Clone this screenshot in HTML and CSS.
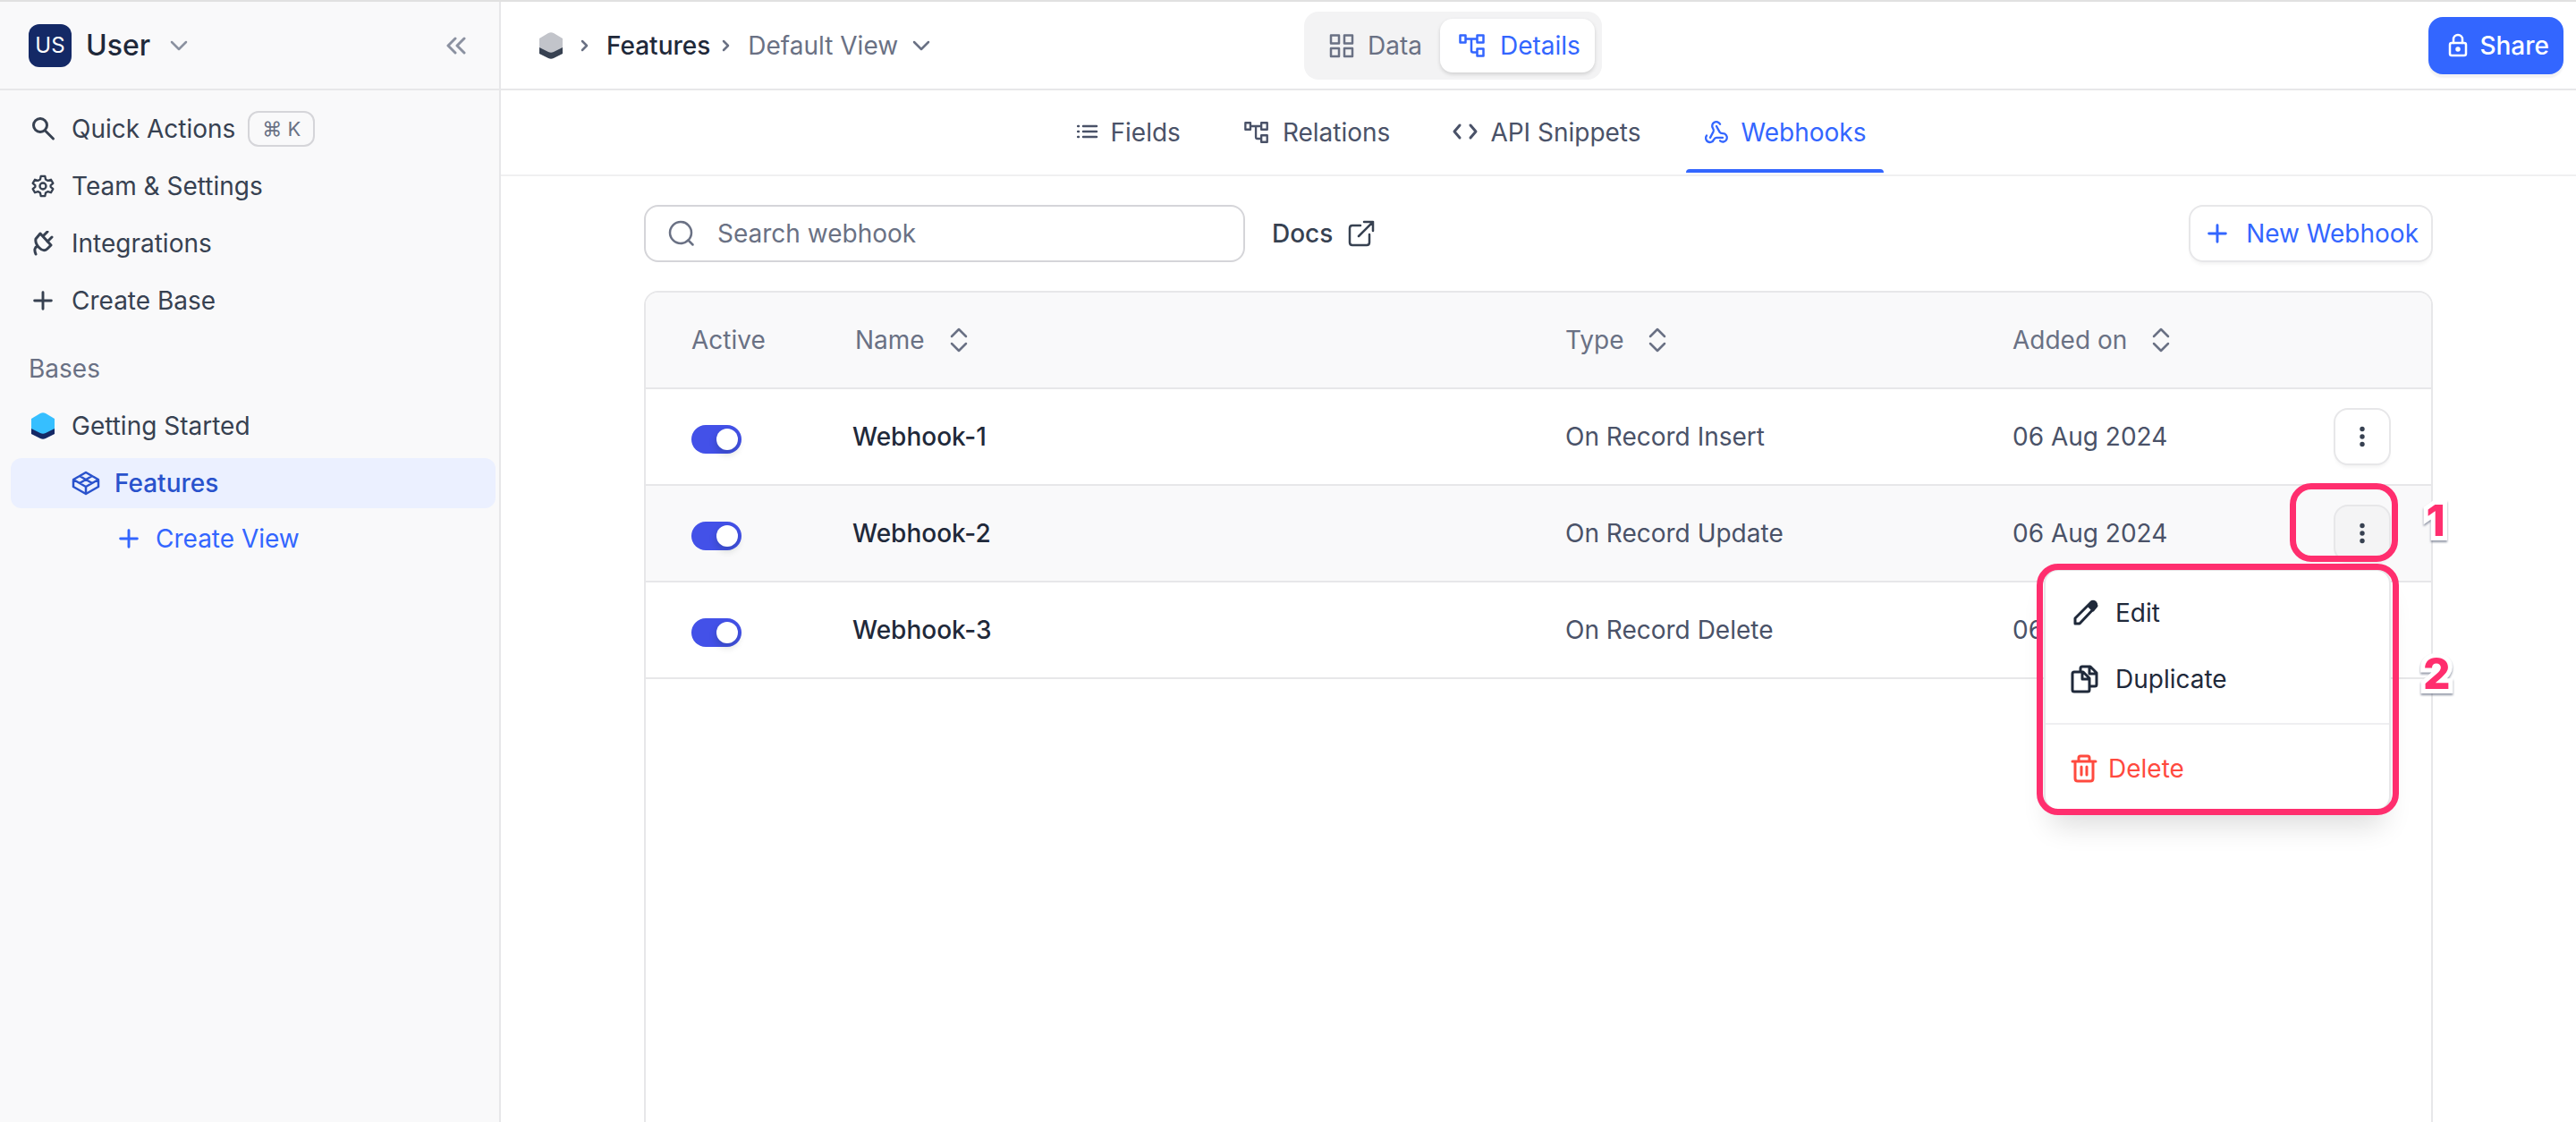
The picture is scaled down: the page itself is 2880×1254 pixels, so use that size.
FILE: index.html
```html
<!DOCTYPE html>
<html lang="en">

<head>
    <meta charset="utf-8">
    <meta name="viewport" content="width=device-width, initial-scale=1.0">
    <title>Webhooks</title>
    <link rel="stylesheet" href="styles.css">
</head>

<body>

    <!-- shared icons -->
    <svg class="sprite" aria-hidden="true">
        <symbol id="plus" viewBox="0 0 24 24"><path d="M12 4v16M4 12h16" /></symbol>
        <symbol id="chevron" viewBox="0 0 24 24"><path d="M4 8l8 8 8-8" /></symbol>
        <symbol id="crumb" viewBox="0 0 12 16"><path d="M3 3l5 5-5 5" /></symbol>
        <symbol id="relation" viewBox="0 0 32 28"><path d="M2.500 2.500h6v8h-6zM21.500 2.500h7v8h-7zM21.500 17.500h7v8h-7zM9 6.500h12M15 6.500v13q0 2 2 2h4" /></symbol>
        <symbol id="sort" viewBox="0 0 20 28"><path d="M2 10l8-8 8 8M2 18l8 8 8-8" /></symbol>
        <symbol id="dots" viewBox="0 0 24 24"><circle cx="12" cy="3.500" r="2.700" /><circle cx="12" cy="12" r="2.700" /><circle cx="12" cy="20.500" r="2.700" /></symbol>
    </svg>

    <aside class="sidebar">
        <div class="sidebar-top">
            <button class="workspace">
                <span class="avatar">US</span>
                <span class="workspace-name">User</span>
                <svg class="icon muted" width="24" height="24"><use href="#chevron" /></svg>
            </button>
            <button class="collapse" aria-label="Collapse sidebar">
                <svg class="icon bold" width="24" height="24" viewBox="0 0 24 24"><path d="M11 4l-8 8 8 8M21 4l-8 8 8 8" /></svg>
            </button>
        </div>

        <nav class="side-nav">
            <a href="#">
                <svg class="icon bold" width="28" height="28" viewBox="0 0 28 28"><circle cx="11" cy="10" r="7.500" /><path d="M16.500 16l9 9" /></svg>
                Quick Actions <kbd>⌘ K</kbd>
            </a>
            <a href="#">
                <svg class="icon gear" width="28" height="28" viewBox="0 0 24 24"><circle cx="12" cy="12" r="3" /><path d="M10 2.500h4l.6 3 2.200 1.300 2.900-1 2 3.500-2.300 2v1.400l2.300 2-2 3.500-2.900-1-2.200 1.300-.6 3h-4l-.6-3-2.200-1.300-2.900 1-2-3.500 2.300-2v-1.400l-2.300-2 2-3.500 2.900 1 2.200-1.300z" /></svg>
                Team &amp; Settings
            </a>
            <a href="#">
                <svg class="icon bold" width="28" height="28" viewBox="0 0 28 28"><path d="M11 3l12 13-4 4q-4 4-9-1t-4-10zM14 6l5-5M19 12l5-5M8 17q-5 2-2 9" /></svg>
                Integrations
            </a>
            <a href="#">
                <svg class="icon" width="28" height="28"><use href="#plus" /></svg>
                Create Base
            </a>
        </nav>

        <h2 class="side-title">Bases</h2>
        <nav class="base-nav">
            <a href="#">
                <svg width="28" height="32" viewBox="0 0 28 32"><path fill="#142966" d="M1 16h26v9l-10 5q-3 1.500-6 0L1 25z" /><path fill="#36bfff" d="M1 8l10-6q3-1.500 6 0l10 6v11l-10 5q-3 1.500-6 0L1 19z" /></svg>
                Getting Started
            </a>
            <a href="#" class="base-table selected">
                <svg class="icon" width="32" height="28" viewBox="0 0 32 28"><path d="M2 10L16 2l14 8v8l-14 8-14-8zM2 10l14 8 14-8M16 18v8M9 6l14 8M23 6L9 14" /></svg>
                Features
            </a>
            <a href="#" class="base-view">
                <svg class="icon" width="28" height="28"><use href="#plus" /></svg>
                Create View
            </a>
        </nav>
    </aside>

    <main>
        <header>
            <nav class="breadcrumb">
                <svg width="28" height="32" viewBox="0 0 28 32"><path fill="#374151" d="M1 16h26v9l-10 5q-3 1.500-6 0L1 25z" /><path fill="#c2c4ca" d="M1 8l10-6q3-1.500 6 0l10 6v10l-10 5q-3 1.500-6 0L1 18z" /></svg>
                <svg class="icon crumb" width="12" height="16"><use href="#crumb" /></svg>
                <a href="#" class="current">Features</a>
                <svg class="icon crumb" width="12" height="16"><use href="#crumb" /></svg>
                <a href="#">Default View</a>
                <svg class="icon" width="24" height="24"><use href="#chevron" /></svg>
            </nav>

            <div class="switcher">
                <button>
                    <svg class="icon" width="28" height="28" viewBox="0 0 28 28"><path d="M2 2.500h9v9H2zM17 2.500h9v9h-9zM2 17h9v9H2zM17 17h9v9h-9z" /></svg>
                    Data
                </button>
                <button class="on">
                    <svg class="icon" width="32" height="28"><use href="#relation" /></svg>
                    Details
                </button>
            </div>

            <button class="share">
                <svg class="icon" width="24" height="28" viewBox="0 0 24 28"><rect x="3" y="11" width="18" height="14" rx="2" /><path d="M7 11V7a5 5 0 0 1 10 0v4" /><circle class="solid" cx="12" cy="18" r="1.500" /></svg>
                Share
            </button>
        </header>

        <nav class="tabs">
            <a href="#">
                <svg class="icon" width="24" height="28" viewBox="0 0 24 28"><path d="M7 7h15M7 13h15M7 19h15M1 7h1M1 13h1M1 19h1" /></svg>
                Fields
            </a>
            <a href="#">
                <svg class="icon" width="30" height="28"><use href="#relation" /></svg>
                Relations
            </a>
            <a href="#">
                <svg class="icon bold" width="28" height="28" viewBox="0 0 28 28"><path d="M8 6l-6 7 6 7M20 6l6 7-6 7" /></svg>
                API Snippets
            </a>
            <a href="#" class="on">
                <svg class="icon webhook" width="28" height="28" viewBox="0 0 24 24"><path d="M18 17h-6c-1.100 0-2 .9-2.500 1.900A4 4 0 1 1 2.600 15M6 17l3.100-5.800c.5-1 .1-2.200-.5-3.100a4 4 0 1 1 6.900-4M12 6l3.100 5.700c.6 1 1.800 1.300 2.900 1.300a4 4 0 1 1-2.500 7" /></svg>
                Webhooks
            </a>
        </nav>

        <div class="content">
            <div class="toolbar">
                <label class="search">
                    <svg class="icon" width="32" height="32" viewBox="0 0 32 32"><circle cx="15" cy="15" r="12" /><path d="M23.500 23.500l5 5" /></svg>
                    <input type="text" placeholder="Search webhook" aria-label="Search webhook">
                </label>
                <a href="#" class="docs">
                    Docs
                    <svg class="icon" width="32" height="32" viewBox="0 0 32 32"><path d="M15 7H6q-3 0-3 3v16q0 3 3 3h16q3 0 3-3v-9M13 19L29 3M19 3h10v10" /></svg>
                </a>
                <button class="new-webhook">
                    <svg class="icon" width="28" height="28"><use href="#plus" /></svg>
                    New Webhook
                </button>
            </div>

            <div class="table-frame">
                <table>
                    <thead>
                        <tr>
                            <th class="col-active">Active</th>
                            <th class="col-name">Name <button class="sort" aria-label="Sort by name"><svg class="icon" width="20" height="28"><use href="#sort" /></svg></button></th>
                            <th class="col-type">Type <button class="sort" aria-label="Sort by type"><svg class="icon" width="20" height="28"><use href="#sort" /></svg></button></th>
                            <th class="col-date">Added on <button class="sort" aria-label="Sort by date"><svg class="icon" width="20" height="28"><use href="#sort" /></svg></button></th>
                            <th class="col-more"></th>
                        </tr>
                    </thead>
                    <tbody>
                        <tr>
                            <td><input type="checkbox" class="toggle" aria-label="Webhook-1 active" checked></td>
                            <td class="name">Webhook-1</td>
                            <td>On Record Insert</td>
                            <td>06 Aug 2024</td>
                            <td><div class="more"><button aria-label="More"><svg width="24" height="24"><use href="#dots" /></svg></button></div></td>
                        </tr>
                        <tr class="active-row">
                            <td><input type="checkbox" class="toggle" aria-label="Webhook-2 active" checked></td>
                            <td class="name">Webhook-2</td>
                            <td>On Record Update</td>
                            <td>06 Aug 2024</td>
                            <td>
                                <div class="more open">
                                    <button aria-label="More"><svg width="24" height="24"><use href="#dots" /></svg></button>
                                    <div class="menu">
                                        <button>
                                            <svg class="icon bold" width="32" height="32" viewBox="0 0 32 32"><path d="M5 28v-6L23 4q2-1.500 4 0t1 5L10 28z" /><path class="solid" d="M20 8l4-4q4-1 5 4l-4 5z" /></svg>
                                            Edit
                                        </button>
                                        <button>
                                            <svg class="icon bold" width="32" height="32" viewBox="0 0 32 32"><path d="M4 8h10l7 7v13q0 2-2 2H4q-2 0-2-2V10q0-2 2-2zM13 8v8h8M11 7V4q0-2 2-2h9l7 7v13q0 2-2 2h-5M21 2v8h8" /></svg>
                                            Duplicate
                                        </button>
                                        <hr>
                                        <button class="danger">
                                            <svg class="icon bold" width="32" height="32" viewBox="0 0 32 32"><path d="M2 8h26M5 8v19q0 3 3 3h14q3 0 3-3V8M9 8V4q0-2 2-2h8q2 0 2 2v4M12 14v9M18 14v9" /></svg>
                                            Delete
                                        </button>
                                    </div>
                                    <span class="mark mark-button"></span>
                                    <span class="mark mark-menu"></span>
                                    <span class="step step-one">1</span>
                                    <span class="step step-two">2</span>
                                </div>
                            </td>
                        </tr>
                        <tr>
                            <td><input type="checkbox" class="toggle" aria-label="Webhook-3 active" checked></td>
                            <td class="name">Webhook-3</td>
                            <td>On Record Delete</td>
                            <td>06 Aug 2024</td>
                            <td><div class="more"><button aria-label="More"><svg width="24" height="24"><use href="#dots" /></svg></button></div></td>
                        </tr>
                    </tbody>
                </table>
            </div>
        </div>
    </main>

</body>

</html>
```
FILE: styles.css
```css
* {
    box-sizing: border-box;
}

body {
    margin: 0;
    min-height: 100vh;
    display: flex;
    border-top: 2px solid #e1e1e1;
    font-family: Inter, "Liberation Sans", sans-serif;
    font-size: 28px;
    line-height: 40px;
    color: #374151;
    background-color: #fff;
}

a {
    color: inherit;
    text-decoration: none;
}

button {
    font: inherit;
    color: inherit;
    padding: 0;
    border: none;
    background: none;
    cursor: pointer;
}

.sprite {
    position: absolute;
    width: 0;
    height: 0;
}

svg {
    flex: none;
    display: block;
}

.icon {
    fill: none;
    stroke: currentColor;
    stroke-width: 2.5px;
    stroke-linecap: round;
    stroke-linejoin: round;
}

.icon.bold {
    stroke-width: 3px;
}

.icon.gear,
.icon.webhook {
    stroke-width: 2px;
}

.solid {
    fill: currentColor;
}

/* sidebar */

.sidebar {
    flex: none;
    width: 560px;
    border-right: 2px solid #e7e7e9;
    background-color: #f9f9fa;
}

.sidebar-top {
    display: flex;
    align-items: center;
    justify-content: space-between;
    height: 99px;
    padding: 0 36px 0 32px;
    border-bottom: 2px solid #e7e7e9;
}

.workspace {
    display: flex;
    align-items: center;
    gap: 16px;
}

.avatar {
    width: 48px;
    height: 48px;
    border-radius: 12px;
    background-color: #142966;
    color: #fff;
    font-size: 24px;
    line-height: 48px;
}

.workspace-name {
    font-size: 32px;
    font-weight: 500;
    color: #1f293a;
    margin-right: 4px;
}

.muted,
.collapse {
    color: #8b91a0;
}

.side-nav {
    padding: 11px 12px 0 34px;
}

.side-nav a,
.base-nav a {
    display: flex;
    align-items: center;
    gap: 18px;
    height: 64px;
}

kbd {
    margin-left: -4px;
    padding: 0 14px;
    border: 2px solid #d5d5d9;
    border-radius: 12px;
    font-family: inherit;
    font-size: 22px;
    line-height: 36px;
    color: #6a7184;
}

.side-title {
    margin: 24px 32px 12px;
    font-size: 28px;
    font-weight: 400;
    color: #6a7184;
}

.base-nav {
    padding: 0 4px 0 12px;
}

.base-nav a {
    padding-left: 22px;
}

.base-nav .base-table {
    height: 56px;
    margin-top: 4px;
    padding-left: 68px;
    gap: 16px;
    border-radius: 12px;
    font-weight: 500;
    color: #2952cc;
}

.base-nav .selected {
    background-color: #ebf0ff;
}

.base-nav .base-view {
    height: 68px;
    padding-left: 118px;
    gap: 16px;
    color: #3366ff;
}

/* top bar */

main {
    flex: 1;
    display: flex;
    flex-direction: column;
}

header {
    display: grid;
    grid-template-columns: 856px auto 1fr;
    align-items: center;
    height: 99px;
    padding: 0 14px 0 42px;
    border-bottom: 2px solid #e7e7e9;
}

.breadcrumb {
    display: flex;
    align-items: center;
    gap: 18px;
    color: #6a7184;
}

.breadcrumb .current {
    margin-right: -2px;
    color: #1f293a;
    font-weight: 500;
}

.breadcrumb a + .icon {
    margin-left: -4px;
}

.switcher {
    display: flex;
    gap: 4px;
    padding: 8px;
    border-radius: 16px;
    background-color: #f3f3f4;
    color: #6a7184;
}

.switcher button {
    display: flex;
    align-items: center;
    gap: 15px;
    height: 60px;
    padding: 0 16px 0 20px;
    border-radius: 14px;
}

.switcher .on {
    background-color: #fff;
    color: #3366ff;
    box-shadow: 0 2px 4px rgba(0, 0, 0, 0.15);
}

.share {
    justify-self: end;
    display: flex;
    align-items: center;
    gap: 12px;
    height: 64px;
    padding: 0 16px 0 21px;
    border-radius: 16px;
    background-color: #3366ff;
    color: #fff;
    font-weight: 500;
    box-shadow: 0 4px 2px #f2f2f4;
}

.tabs {
    display: flex;
    justify-content: center;
    gap: 30px;
    height: 96px;
    padding-right: 150px;
    border-bottom: 2px solid #f0f0f1;
    color: #4a5268;
}

.tabs a {
    position: relative;
    display: flex;
    align-items: center;
    gap: 14px;
    padding: 0 20px;
}

.tabs .on {
    color: #3366ff;
}

.tabs .on::after {
    content: "";
    position: absolute;
    left: 0;
    right: 0;
    bottom: 2px;
    height: 4px;
    border-radius: 4px 4px 0 0;
    background-color: #3366ff;
}

/* webhook list */

.content {
    flex: 1;
    display: flex;
    flex-direction: column;
    gap: 32px;
    width: 100%;
    max-width: 2000px;
    margin: 0 auto;
    padding-top: 32px;
}

.toolbar {
    display: flex;
    align-items: center;
    gap: 30px;
}

.search {
    display: flex;
    align-items: center;
    gap: 22px;
    width: 672px;
    height: 64px;
    padding: 0 24px;
    border: 2px solid #d5d5d9;
    border-radius: 16px;
    color: #6a7184;
}

.search input {
    flex: 1;
    border: none;
    outline: none;
    background: none;
    font: inherit;
}

.search input::placeholder {
    color: #6a7184;
}

.docs {
    display: flex;
    align-items: center;
    gap: 16px;
    font-weight: 500;
}

.new-webhook {
    display: flex;
    align-items: center;
    gap: 18px;
    height: 64px;
    margin-left: auto;
    padding: 0 14px 0 16px;
    border: 2px solid #e7e7e9;
    border-radius: 16px;
    color: #3366ff;
    box-shadow: 0 4px 4px -2px rgba(0, 0, 0, 0.06);
}

.table-frame {
    flex: 1;
    border: 2px solid #e7e7e9;
    border-bottom: none;
    border-radius: 16px 16px 0 0;
}

table {
    width: 100%;
    table-layout: fixed;
    border-collapse: separate;
    border-spacing: 0;
}

th,
td {
    height: 108px;
    padding: 0;
    border-bottom: 2px solid #e7e7e9;
    text-align: left;
    font-weight: 400;
}

th {
    background-color: #f9f9fa;
    color: #6a7184;
}

th:first-child {
    border-top-left-radius: 14px;
}

th:last-child {
    border-top-right-radius: 14px;
}

th:first-child,
td:first-child {
    padding-left: 51px;
}

td {
    color: #4a5268;
}

.col-active {
    width: 231px;
}

.col-name {
    padding-left: 3px;
}

.col-type {
    width: 500px;
}

.col-date {
    width: 359px;
}

.col-more {
    width: 109px;
}

.sort {
    margin: 0 0 4px 20px;
    vertical-align: middle;
}

.name {
    color: #1f293a;
    font-weight: 500;
}

.active-row td {
    background-color: #f9f9fa;
}

.toggle {
    appearance: none;
    display: block;
    width: 56px;
    height: 32px;
    margin: 6px 0 0;
    padding: 4px;
    border-radius: 16px;
    background-color: #c2c4ca;
}

.toggle::before {
    content: "";
    display: block;
    width: 24px;
    height: 24px;
    border-radius: 50%;
    background-color: #fff;
    box-shadow: 0 4px 8px rgba(0, 35, 11, 0.2);
}

.toggle:checked {
    background-color: #4351e8;
}

.toggle:checked::before {
    margin-left: 24px;
}

.more {
    position: relative;
    width: 64px;
}

.more > button {
    display: flex;
    align-items: center;
    justify-content: center;
    width: 64px;
    height: 64px;
    border: 2px solid #e7e7e9;
    border-radius: 16px;
    background-color: #fff;
    box-shadow: 0 4px 4px -2px rgba(0, 0, 0, 0.06);
}

.more > button svg {
    fill: #374151;
}

.open {
    z-index: 1;
}

.open > button {
    background-color: #f4f4f5;
}

.menu {
    position: absolute;
    top: 72px;
    right: 0;
    width: 388px;
    padding: 10px 0 8px;
    border: 2px solid #e7e7e9;
    border-radius: 16px;
    background-color: #fff;
    color: #1f293a;
    box-shadow: 0 24px 32px -8px rgba(0, 0, 0, 0.14);
}

.menu button {
    display: flex;
    align-items: center;
    gap: 18px;
    width: 100%;
    height: 74px;
    padding-left: 28px;
}

.menu hr {
    margin: 12px 0;
    border: none;
    border-top: 2px solid #efeff1;
}

.menu .danger {
    gap: 10px;
    color: #ff4a3f;
}

/* highlights */

.mark {
    position: absolute;
    border: 7px solid #ff2e6e;
    border-radius: 24px;
    pointer-events: none;
}

.mark-button {
    top: -24px;
    left: -49px;
    width: 121px;
    height: 88px;
}

.mark-menu {
    top: 66px;
    left: -332px;
    width: 405px;
    height: 281px;
}

.step {
    position: absolute;
    left: 100px;
    width: 28px;
    text-align: center;
    font-size: 48px;
    font-weight: 800;
    line-height: 48px;
    color: #ff2e6e;
    -webkit-text-stroke: 10px #fff;
    paint-order: stroke fill;
    filter: drop-shadow(0 2px 1px rgba(40, 50, 80, 0.5));
}

.step-one {
    top: -6px;
}

.step-two {
    top: 165px;
}
```
